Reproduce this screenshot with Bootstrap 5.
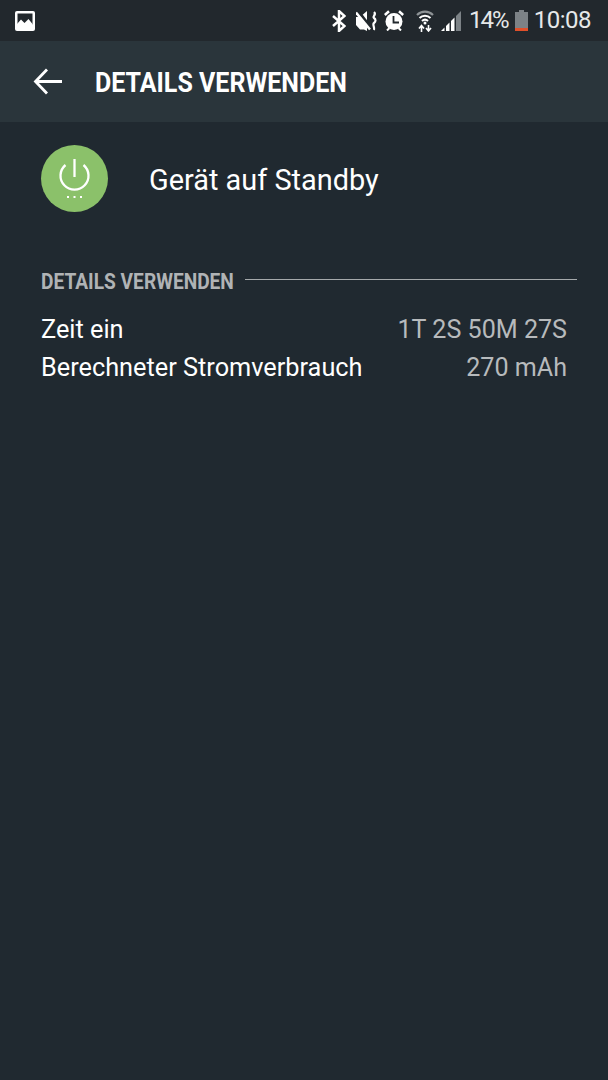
<!DOCTYPE html>
<html lang="de">
<head>
<meta charset="UTF-8" />
<meta name="viewport" content="width=device-width, initial-scale=1.0" />
<title>Details verwenden</title>
<link href="https://cdn.jsdelivr.net/npm/bootstrap@5.3.0/dist/css/bootstrap.min.css" rel="stylesheet" />
<style>
  body {
    background-color: #202930;
    font-family: Roboto, "Liberation Sans", sans-serif;
    color: #fff;
    height: 1080px;
    overflow: hidden;
  }
  .status-bar {
    height: 41px;
    background-color: #22282d;
    padding: 0 17px 0 15px;
  }
  .status-text {
    font-size: 24px;
    color: #e6e8e9;
    line-height: 41px;
    letter-spacing: -0.5px;
  }
  .status-percent {
    letter-spacing: -1.9px;
  }
  .gap-l6 { margin-left: 6px; }
  .gap-l7 { margin-left: 7px; }
  .gap-l8 { margin-left: 8px; }
  .gap-l10 { margin-left: 10px; }
  .gap-l12 { margin-left: 12px; }
  .app-bar {
    height: 81px;
    background-color: #2a353b;
    padding-left: 33px;
  }
  .app-title {
    font-size: 28px;
    font-weight: 700;
    line-height: 34px;
    margin: 2px 0 0 33px;
    transform: scaleX(0.893);
    transform-origin: left center;
    white-space: nowrap;
  }
  .usage-head {
    padding: 23px 0 0 41px;
  }
  .usage-icon {
    width: 67px;
    height: 67px;
    border-radius: 50%;
    background-color: #8bc16a;
    flex: none;
  }
  .usage-name {
    font-size: 28.9px;
    margin-left: 41px;
    line-height: 71px;
  }
  .section-head {
    padding: 47px 31px 10px 41px;
    height: 95px;
  }
  .section-title {
    font-size: 22px;
    font-weight: 700;
    color: #b0b3b5;
    width: 193px;
    line-height: 24px;
    flex: none;
  }
  .section-title span {
    display: inline-block;
    transform: scaleX(0.87);
    transform-origin: left center;
    white-space: nowrap;
  }
  .section-line {
    height: 1px;
    background-color: #a5a9ab;
    margin: 0 0 6px 11px;
  }
  .detail-row {
    padding: 0 41px;
    font-size: 25.3px;
    line-height: 38px;
  }
  .detail-value {
    color: #b7babc;
    font-size: 25.1px;
  }
</style>
</head>
<body>
  <!-- Statusleiste -->
  <div class="status-bar d-flex align-items-center">
    <svg width="20" height="20" viewBox="0 0 20 20">
      <rect width="20" height="20" rx="2" fill="#fff" />
      <rect x="2.500" y="2.500" width="15" height="11" fill="#22282d" />
      <path d="M2 13 6 8.500l3.500 3.500 4-4 4 5v3H2z" fill="#fff" />
    </svg>
    <div class="ms-auto d-flex align-items-center">
      <svg width="14" height="22" viewBox="0 0 14 22" fill="none" stroke="#fff" stroke-width="2.500">
        <path d="M1 6 12.500 16 7 21V1l5.500 5L1 16" />
      </svg>
      <svg class="gap-l10" width="22" height="20" viewBox="0 0 22 20">
        <path d="M0 6h4l7-6v20l-3-1.500H4L0 14z" fill="#fff" />
        <path d="M2 0 15 17" stroke="#22282d" stroke-width="3" />
        <path d="M0 1.500 14 18.500" stroke="#fff" stroke-width="2.500" />
        <path d="M18 1c3 2.500-2 4.500 0 6s2 3.500 0 5 1 4.500 0 7" fill="none" stroke="#fff" stroke-width="2.200" />
      </svg>
      <svg class="gap-l6" width="20" height="21" viewBox="0 0 20 21">
        <circle cx="10" cy="11.500" r="8.500" fill="#fff" />
        <path d="M9.500 6v6.500H15" fill="none" stroke="#22282d" stroke-width="1.800" />
        <path d="M.8 5 5 1.200M19.200 5 15 1.200" stroke="#fff" stroke-width="2.500" />
        <path d="M3 20.500l2.500-2.500M17 20.500 14.500 18" stroke="#fff" stroke-width="2" />
      </svg>
      <svg class="gap-l12" width="18" height="22" viewBox="0 0 18 22" fill="none">
        <path d="M1 5c4.500-4.500 11.500-4.500 16 0" stroke="#8d9295" stroke-width="2.200" />
        <path d="M3.500 8c3-3 8-3 11 0" stroke="#fff" stroke-width="2" />
        <path d="M6 11c1.800-1.700 4.200-1.700 6 0" stroke="#fff" stroke-width="2" />
        <circle cx="9" cy="13" r="1.500" fill="#fff" />
        <path d="M5.500 22v-5.500M3 18.500l2.500-3 2.500 3M12.500 15v5.500M10 18l2.500 3 2.500-3" stroke="#fff" stroke-width="1.600" />
      </svg>
      <svg class="gap-l7" width="20" height="20" viewBox="0 0 20 20">
        <path d="M0 20h3.500v-3.500z" fill="#fff" />
        <path d="M5 20h3.500v-8.500L5 15z" fill="#fff" />
        <path d="M10 20h3.500V6.500L10 10z" fill="#fff" />
        <path d="M15 20h5V0l-5 5z" fill="#7c8286" />
      </svg>
      <span class="status-text status-percent gap-l8">14%</span>
      <svg class="gap-l7" width="13" height="21" viewBox="0 0 13 21">
        <path d="M4 0h5v2h4v19H0V2h4z" fill="#7c8286" />
        <rect y="18" width="13" height="3" fill="#e0502a" />
      </svg>
      <span class="status-text gap-l6">10:08</span>
    </div>
  </div>

  <!-- Titelleiste -->
  <div class="app-bar d-flex align-items-center">
    <svg width="29" height="27" viewBox="0 0 29 27" fill="none" stroke="#fff" stroke-width="2.800">
      <path d="M29 13.500H3M14 1.500 2.500 13.500 14 25.500" />
    </svg>
    <div class="app-title">DETAILS VERWENDEN</div>
  </div>

  <!-- Eintrag -->
  <div class="usage-head d-flex align-items-start">
    <div class="usage-icon">
      <svg class="d-block" width="67" height="67" viewBox="0 0 67 67" fill="none" stroke="#fff" stroke-width="2.300">
        <path d="M24.500 20a14 14 0 1 0 18 0" />
        <path d="M33.500 14v18" />
        <path d="M26 52h2M32.500 52h2M39 52h2" stroke-width="2" />
      </svg>
    </div>
    <div class="usage-name">Gerät auf Standby</div>
  </div>

  <!-- Details -->
  <div class="section-head d-flex align-items-center">
    <div class="section-title"><span>DETAILS VERWENDEN</span></div>
    <div class="section-line flex-grow-1"></div>
  </div>
  <div class="detail-row d-flex justify-content-between">
    <span>Zeit ein</span>
    <span class="detail-value">1T 2S 50M 27S</span>
  </div>
  <div class="detail-row d-flex justify-content-between">
    <span>Berechneter Stromverbrauch</span>
    <span class="detail-value">270 mAh</span>
  </div>

  <script src="https://cdn.jsdelivr.net/npm/bootstrap@5.3.0/dist/js/bootstrap.bundle.min.js"></script>
</body>
</html>
